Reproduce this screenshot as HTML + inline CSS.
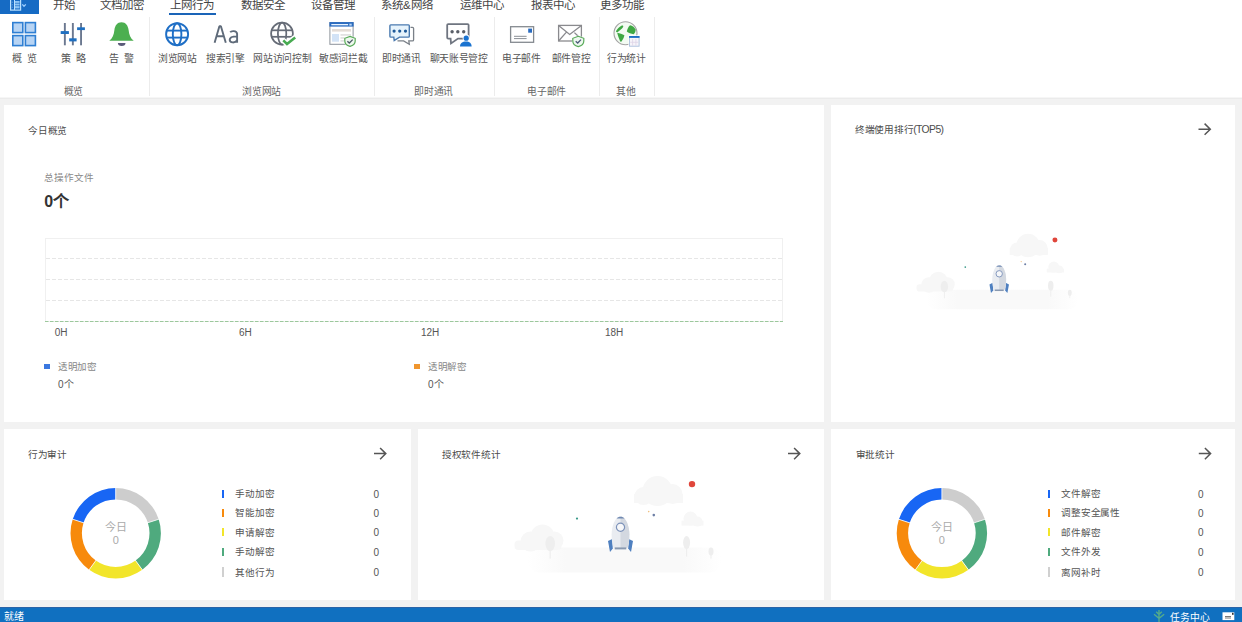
<!DOCTYPE html>
<html lang="zh-CN">
<head>
<meta charset="utf-8">
<style>
*{margin:0;padding:0;box-sizing:border-box}
html,body{width:1242px;height:622px;overflow:hidden;background:#fff;font-family:"Liberation Sans",sans-serif;color:#444}
.a{position:absolute;white-space:nowrap;line-height:1}
.sep{position:absolute;top:17px;width:1px;height:79px;background:#ececec}
#gray{position:absolute;left:0;top:97px;width:1242px;height:510px;background:#f2f2f2}
.card{position:absolute;background:#fff}
.dn{font-size:11px;color:#aaa;text-align:center;width:40px}
#status{position:absolute;left:0;top:607px;width:1242px;height:15px;background:#1070c0}
</style>
</head>
<body>
<div class="a" style="left:0;top:0;width:39px;height:14px;background:#166bc4"></div>
<svg class="a" style="left:0;top:0" width="40" height="15" viewBox="0 0 40 15">
  <rect x="10.6" y="-1" width="10" height="11.1" fill="none" stroke="#b8e0ff" stroke-width="1.2"/>
  <rect x="14" y="0" width="1" height="10" fill="#b8e0ff"/>
  <rect x="15" y="1" width="4.6" height="1.9" fill="#8cc4f4"/>
  <rect x="15" y="3.5" width="4.6" height="2" fill="#8cc4f4"/>
  <rect x="15" y="6.1" width="4.6" height="2.3" fill="#8cc4f4"/>
  <g fill="#4a8ad0"><rect x="11.5" y="1.5" width="1.6" height="1.5"/><rect x="11.5" y="4" width="1.6" height="1.5"/><rect x="11.5" y="6.5" width="1.6" height="1.5"/></g>
  <path d="M22.3 4.4 L24 6.2 L25.8 4.4" fill="none" stroke="#9fd0ff" stroke-width="1.3"/>
</svg>
<div class="a" style="left:169px;top:13px;width:47px;height:2px;background:#1a64b8"></div>
<div class="sep" style="left:149px"></div>
<div class="sep" style="left:374px"></div>
<div class="sep" style="left:494px"></div>
<div class="sep" style="left:599px"></div>
<div class="sep" style="left:654px"></div>
<svg class="a" style="left:0;top:0" width="660" height="50" viewBox="0 0 660 50">
<!-- grid -->
<g fill="#b7d4f4" stroke="#2f7fd3" stroke-width="1.6">
<rect x="12.8" y="22.6" width="10" height="10"/>
<rect x="25.4" y="22.6" width="10" height="10"/>
<rect x="12.8" y="35.6" width="10" height="10"/>
<rect x="25.4" y="35.6" width="10" height="10"/>
</g>
<!-- sliders -->
<g fill="#6b7890">
<rect x="63.9" y="23" width="1.9" height="22.3"/>
<rect x="71.9" y="23" width="1.9" height="22.3"/>
<rect x="80.1" y="23" width="1.9" height="22.3"/>
</g>
<g fill="#1f6fc0">
<rect x="60.7" y="31.1" width="8.2" height="2.9"/>
<rect x="69.2" y="38.3" width="7.4" height="3.1"/>
<rect x="77.1" y="27.3" width="7.8" height="2.8"/>
</g>
<!-- bell -->
<path d="M121.5 22.3 C117.2 22.3 115 25.6 114.4 30 C113.8 35 112.6 38.2 109.3 40.8 L133.7 40.8 C130.4 38.2 129.2 35 128.6 30 C128 25.6 125.8 22.3 121.5 22.3 Z" fill="#4caf50"/>
<path d="M117.9 43 A3.8 3 0 0 0 125.5 43 Z" fill="#5b5b7a"/>
<!-- blue globe -->
<g fill="none" stroke="#1f6fc6" stroke-width="1.9">
<circle cx="177.1" cy="34.2" r="11"/>
<ellipse cx="177.1" cy="34.2" rx="4.3" ry="11"/>
<line x1="166.6" y1="30.6" x2="187.6" y2="30.6"/>
<line x1="166.6" y1="37.6" x2="187.6" y2="37.6"/>
</g>
<!-- Aa -->
<g fill="none" stroke="#5f6b7a" stroke-width="1.9">
<path d="M214.6 42.8 L219.4 26.2 L220.9 26.2 L225.8 42.8 M216.6 36.2 L223.7 36.2" stroke-linejoin="bevel"/>
<path d="M230.2 32.2 C231.2 30.8 236.6 30.2 237.1 33.8 L237.1 42.8 M237.1 36.4 C233 36.4 229.7 37.2 229.7 39.8 C229.7 43.2 235.2 43.2 237.1 40.4"/>
</g>
<!-- gray globe -->
<g fill="none" stroke="#666c77" stroke-width="1.75">
<circle cx="282" cy="33.6" r="10.9"/>
<ellipse cx="282.1" cy="33.6" rx="4.2" ry="10.9"/>
<line x1="271.5" y1="30.3" x2="292.5" y2="30.3"/>
<line x1="271.5" y1="36.8" x2="292.5" y2="36.8"/>
</g>
<path d="M283.3 40.4 L287 44 L295.2 37.5" fill="none" stroke="#fff" stroke-width="5.5"/>
<path d="M283.3 40.4 L287 44 L295.2 37.5" fill="none" stroke="#48ab52" stroke-width="2.6"/>
<!-- browser window -->
<rect x="329.9" y="22.6" width="23.2" height="21.7" fill="#fff" stroke="#8d939b" stroke-width="1"/>
<rect x="329.4" y="22.1" width="24.2" height="4.5" fill="#2b6cc0"/>
<rect x="331.3" y="24" width="16.8" height="1.3" fill="#e8f3ff"/>
<rect x="349.3" y="23.7" width="2.4" height="1.9" fill="#bcd8f5"/>
<rect x="332" y="29" width="19" height="2.6" fill="#e4dcd6"/>
<rect x="332" y="34" width="7" height="7.7" fill="#d3e3f6"/>
<rect x="340.5" y="34" width="10.5" height="1.8" fill="#e2e2e2"/>
<rect x="340.5" y="37" width="10.5" height="1.8" fill="#e2e2e2"/>
<rect x="340.5" y="40" width="10.5" height="1.7" fill="#e2e2e2"/>
<path d="M350 35.6 L356 37.8 L356 41 C356 44.2 353.4 46.2 350 47 C346.6 46.2 344 44.2 344 41 L344 37.8 Z" fill="#fff"/>
<path d="M350 36.4 L355.2 38.3 L355.2 41 C355.2 43.8 353 45.5 350 46.3 C347 45.5 344.8 43.8 344.8 41 L344.8 38.3 Z" fill="#eef8ee" stroke="#5aab5a" stroke-width="1.2"/>
<path d="M347.4 41.2 L349.3 43 L352.7 39.6" fill="none" stroke="#4b5866" stroke-width="1.3"/>
<!-- chat 1 -->
<path d="M410.5 27.3 L412.4 27.3 Q413.6 27.3 413.6 28.5 L413.6 39.7 Q413.6 40.9 412.4 40.9 L408.8 40.9 L409.3 44.2 L403.6 40.9 L397.5 40.9" fill="none" stroke="#7a8088" stroke-width="1.3"/>
<path d="M390.7 24.9 L408.5 24.9 Q409.3 24.9 409.3 25.7 L409.3 36.3 Q409.3 37.1 408.5 37.1 L399.5 37.1 L394.2 40.6 L393.8 37.1 L390.7 37.1 Q389.9 37.1 389.9 36.3 L389.9 25.7 Q389.9 24.9 390.7 24.9 Z" fill="#e6f3fc" stroke="#4a7ab0" stroke-width="1.4"/>
<g fill="#1f5a9a"><circle cx="394.1" cy="31.1" r="1.6"/><circle cx="399.7" cy="31.1" r="1.6"/><circle cx="405.5" cy="31.1" r="1.6"/></g>
<!-- chat 2 -->
<path d="M448.2 24.1 L467.6 24.1 Q468.6 24.1 468.6 25.1 L468.6 37.6 Q468.6 38.6 467.6 38.6 L458 38.6 L451 43.4 L450.6 38.6 L448.2 38.6 Q447.2 38.6 447.2 37.6 L447.2 25.1 Q447.2 24.1 448.2 24.1 Z" fill="#fff" stroke="#6f7580" stroke-width="1.8"/>
<g fill="#5a5f68"><circle cx="452.1" cy="31.8" r="1.7"/><circle cx="457.8" cy="31.8" r="1.7"/><circle cx="463.7" cy="31.8" r="1.7"/></g>
<path d="M459 47.2 C459 42.8 461.8 40.6 466 40.6 C470.2 40.6 473 42.8 473 47.2 Z" fill="#fff"/>
<circle cx="466.2" cy="38" r="3.6" fill="#fff"/>
<circle cx="466.2" cy="38.2" r="2.6" fill="#1a73d0"/>
<path d="M460 46.6 C460 43.3 462.5 41.6 466 41.6 C469.5 41.6 471.6 43.3 471.6 46.6 Z" fill="#1a73d0"/>
<!-- envelope -->
<rect x="510.6" y="26.7" width="23" height="15.6" fill="#fff" stroke="#858a90" stroke-width="1.3"/>
<rect x="528.2" y="28.6" width="3.8" height="4.1" fill="#2a6cc0"/>
<g stroke="#8a8f95" stroke-width="1"><line x1="514" y1="36.3" x2="526.6" y2="36.3"/><line x1="514" y1="38.6" x2="526.6" y2="38.6"/></g>
<!-- mail shield -->
<g fill="none" stroke="#8a8a8e" stroke-width="1.3">
<rect x="558.6" y="25.4" width="22.8" height="15.6" fill="#fff"/>
<path d="M558.6 25.4 L569.7 34.5 L581.4 25.4 M558.6 41 L566.2 32.4 M574.4 32.6 L578 36"/>
</g>
<path d="M578.3 35.4 L584.6 37.8 L584.6 41 C584.6 44.5 581.8 46.6 578.3 47.5 C574.8 46.6 572 44.5 572 41 L572 37.8 Z" fill="#fff"/>
<path d="M578.3 36.3 L583.8 38.3 L583.8 41 C583.8 44 581.5 45.9 578.3 46.7 C575.1 45.9 572.8 44 572.8 41 L572.8 38.3 Z" fill="#eef8f0" stroke="#5aab5a" stroke-width="1.2"/>
<path d="M575.7 41.2 L577.7 43 L581 39.6" fill="none" stroke="#4a5a78" stroke-width="1.3"/>
<!-- green globe -->
<circle cx="625.5" cy="33.2" r="11.5" fill="#f3fbf2" stroke="#a3a3a3" stroke-width="1.1"/>
<g fill="#3fa843">
<path d="M622.8 25.6 C623.7 26.2 623.3 27.5 622 28.5 L617.8 31.9 C616.7 32.5 615.7 31.9 616.1 31 C617.2 28.9 619.4 26.7 621.4 25.7 C621.9 25.4 622.4 25.4 622.8 25.6 Z"/>
<path d="M617.2 32.7 C619.5 33.2 622.6 34 624.4 35.3 C624.1 37.6 622.6 39.9 621.3 41.7 C620.7 42.1 620.2 41.7 620 41 C619.1 38.3 617.7 35.5 617.2 32.7 Z"/>
<path d="M630 25.2 C632.4 25.7 634.9 27.5 635.6 29.6 C635.8 31.4 634.9 33.3 633.6 34.2 C631.1 33.7 628.4 32.9 626.8 31.4 C627.3 29 628.4 26.7 630 25.2 Z"/>
</g>
<rect x="628.4" y="35.3" width="11.8" height="12" fill="#fff"/>
<rect x="629.5" y="36.5" width="9.6" height="9.7" fill="#f6f4f9" stroke="#a9bfdc" stroke-width="0.9"/>
<rect x="629.1" y="36" width="10.4" height="1.9" fill="#1e6fc6"/>
<g stroke="#ddd3e6" stroke-width="0.8"><line x1="632.6" y1="39" x2="632.6" y2="45.6"/><line x1="635.9" y1="39" x2="635.9" y2="45.6"/><line x1="630.2" y1="42.3" x2="638.4" y2="42.3"/></g>
</svg>
<div id="gray"></div><div class="a" style="left:0;top:97px;width:1242px;height:1px;background:#f6f6f6"></div><div class="a" style="left:0;top:98px;width:1242px;height:1px;background:#ebebeb"></div>
<div class="card" style="left:4px;top:105px;width:820px;height:317px"></div>
<div class="card" style="left:831px;top:105px;width:404px;height:317px"></div>
<div class="card" style="left:4px;top:429px;width:407px;height:171px"></div>
<div class="card" style="left:418px;top:429px;width:406px;height:171px"></div>
<div class="card" style="left:831px;top:429px;width:404px;height:171px"></div>
<svg class="a" style="left:0;top:0" width="1242" height="622" viewBox="0 0 1242 622">
<defs>
<linearGradient id="gnd2" x1="0" y1="0" x2="1" y2="0"><stop offset="0" stop-color="#fff"/><stop offset="0.2" stop-color="#f9f9f9"/><stop offset="0.8" stop-color="#f9f9f9"/><stop offset="1" stop-color="#fff"/></linearGradient><radialGradient id="gnd" cx="0.5" cy="0.5" r="0.5"><stop offset="0" stop-color="#f7f7f7"/><stop offset="0.75" stop-color="#fafafa"/><stop offset="1" stop-color="#fff" stop-opacity="0"/></radialGradient>
</defs>
<!-- chart -->
<rect x="45.5" y="238.5" width="737" height="83" fill="none" stroke="#f0f0f0" stroke-width="1"/>
<g stroke="#e6e6e6" stroke-width="1" stroke-dasharray="4 2">
<line x1="46" y1="258.5" x2="782" y2="258.5"/>
<line x1="46" y1="279.5" x2="782" y2="279.5"/>
<line x1="46" y1="300.5" x2="782" y2="300.5"/>
</g>
<line x1="45" y1="321.5" x2="783" y2="321.5" stroke="#9cc89c" stroke-width="1" stroke-dasharray="3.5 1.5"/>
<rect x="44" y="364" width="6" height="5" fill="#3b78e0"/>
<rect x="414" y="364" width="6" height="5" fill="#f0962e"/>
<!-- arrows -->
<g fill="none" stroke="#555" stroke-width="1.5">
<path d="M1198.5 129.2 L1210.3 129.2 M1204.6 123.6 L1210.3 129.2 L1204.6 134.8"/>
<path d="M374 453.6 L385.8 453.6 M380.1 448 L385.8 453.6 L380.1 459.2"/>
<path d="M788 453.6 L799.8 453.6 M794.1 448 L799.8 453.6 L794.1 459.2"/>
<path d="M1198.8 453.6 L1210.6 453.6 M1204.9 448 L1210.6 453.6 L1204.9 459.2"/>
</g>
<path d="M115.70 488.00 A45.2 45.2 0 0 1 158.69 519.23 L147.85 522.76 A33.8 33.8 0 0 0 115.70 499.40 Z" fill="#cdcdcd"/><path d="M158.69 519.23 A45.2 45.2 0 0 1 142.27 569.77 L135.57 560.54 A33.8 33.8 0 0 0 147.85 522.76 Z" fill="#4faa7e"/><path d="M142.27 569.77 A45.2 45.2 0 0 1 89.13 569.77 L95.83 560.54 A33.8 33.8 0 0 0 135.57 560.54 Z" fill="#f2e52a"/><path d="M89.13 569.77 A45.2 45.2 0 0 1 72.71 519.23 L83.55 522.76 A33.8 33.8 0 0 0 95.83 560.54 Z" fill="#f78a0c"/><path d="M72.71 519.23 A45.2 45.2 0 0 1 115.70 488.00 L115.70 499.40 A33.8 33.8 0 0 0 83.55 522.76 Z" fill="#1866f4"/><line x1="115.70" y1="500.20" x2="115.70" y2="487.20" stroke="#fff" stroke-width="0.8"/><line x1="147.08" y1="523.00" x2="159.45" y2="518.99" stroke="#fff" stroke-width="0.8"/><line x1="135.10" y1="559.90" x2="142.74" y2="570.41" stroke="#fff" stroke-width="0.8"/><line x1="96.30" y1="559.90" x2="88.66" y2="570.41" stroke="#fff" stroke-width="0.8"/><line x1="84.32" y1="523.00" x2="71.95" y2="518.99" stroke="#fff" stroke-width="0.8"/>
<path d="M941.90 488.10 A45.2 45.2 0 0 1 984.89 519.33 L974.05 522.86 A33.8 33.8 0 0 0 941.90 499.50 Z" fill="#cdcdcd"/><path d="M984.89 519.33 A45.2 45.2 0 0 1 968.47 569.87 L961.77 560.64 A33.8 33.8 0 0 0 974.05 522.86 Z" fill="#4faa7e"/><path d="M968.47 569.87 A45.2 45.2 0 0 1 915.33 569.87 L922.03 560.64 A33.8 33.8 0 0 0 961.77 560.64 Z" fill="#f2e52a"/><path d="M915.33 569.87 A45.2 45.2 0 0 1 898.91 519.33 L909.75 522.86 A33.8 33.8 0 0 0 922.03 560.64 Z" fill="#f78a0c"/><path d="M898.91 519.33 A45.2 45.2 0 0 1 941.90 488.10 L941.90 499.50 A33.8 33.8 0 0 0 909.75 522.86 Z" fill="#1866f4"/><line x1="941.90" y1="500.30" x2="941.90" y2="487.30" stroke="#fff" stroke-width="0.8"/><line x1="973.28" y1="523.10" x2="985.65" y2="519.09" stroke="#fff" stroke-width="0.8"/><line x1="961.30" y1="560.00" x2="968.94" y2="570.51" stroke="#fff" stroke-width="0.8"/><line x1="922.50" y1="560.00" x2="914.86" y2="570.51" stroke="#fff" stroke-width="0.8"/><line x1="910.52" y1="523.10" x2="898.15" y2="519.09" stroke="#fff" stroke-width="0.8"/>
<g transform="translate(620.5 534.6)">
<rect x="-93" y="13" width="194" height="25" rx="12" fill="url(#gnd2)"/>
<g fill="#f7f7f7">
<circle cx="-90" cy="7" r="10"/><circle cx="-78" cy="2" r="12"/><circle cx="-66" cy="6" r="9"/><rect x="-106" y="6" width="47" height="9.5" rx="4"/>
<circle cx="37" cy="-43.5" r="15"/><circle cx="52" cy="-40.5" r="10"/><circle cx="23" cy="-38.5" r="9"/><rect x="13.5" y="-40.5" width="49" height="9"/>
<circle cx="70" cy="-16" r="7"/><circle cx="77" cy="-13" r="5"/><rect x="61" y="-14" width="22" height="5"/>
</g>
<g fill="#eeeeee">
<ellipse cx="-70.3" cy="9" rx="4.8" ry="7.5"/><rect x="-70.9" y="12" width="1.2" height="12"/>
<ellipse cx="66.1" cy="8" rx="3.5" ry="6.5"/><rect x="65.5" y="10" width="1.2" height="12"/>
<ellipse cx="90.5" cy="17" rx="2.5" ry="4"/><rect x="90" y="18" width="1" height="6"/>
</g>
<circle cx="71.5" cy="-50.5" r="3.2" fill="#e0463b"/>
<circle cx="-43.5" cy="-16" r="1.1" fill="#3a9a8a"/>
<circle cx="33.3" cy="-19.5" r="1.3" fill="#6d7fa6"/>
<circle cx="28.2" cy="-23" r="0.8" fill="#f0c080"/>
<path d="M-12.5 6.3 L-8.3 4.3 L-7.7 14 L-10.5 17.4 Z" fill="#4f80c0"/>
<path d="M12.5 6.3 L8.3 4.3 L7.7 14 L10.5 17.4 Z" fill="#4f80c0"/>
<path d="M0 -18.2 C-5.6 -18.2 -8.9 -8 -8.9 0 C-8.9 6 -8.1 10 -7 13.2 L7 13.2 C8.1 10 8.9 6 8.9 0 C8.9 -8 5.6 -18.2 0 -18.2 Z" fill="#e9ecf1"/>
<path d="M0 -18.2 C5.6 -18.2 8.9 -8 8.9 0 C8.9 6 8.1 10 7 13.2 L0 13.2 Z" fill="#d3d8e0"/>
<path d="M-3.8 -16.2 C-2.6 -18.4 2.6 -18.4 3.8 -16.2 Z" fill="#7089b2"/>
<rect x="-5.8" y="12.8" width="11.6" height="2" fill="#8898b0"/>
<circle cx="0" cy="-7.3" r="4.1" fill="#f6f7f9" stroke="#7d93ba" stroke-width="1.2"/>
</g>
</g>
<g transform="translate(999.2 279.5) scale(0.78)">
<rect x="-93" y="13" width="194" height="25" rx="12" fill="url(#gnd2)"/>
<g fill="#f7f7f7">
<circle cx="-90" cy="7" r="10"/><circle cx="-78" cy="2" r="12"/><circle cx="-66" cy="6" r="9"/><rect x="-106" y="6" width="47" height="9.5" rx="4"/>
<circle cx="37" cy="-43.5" r="15"/><circle cx="52" cy="-40.5" r="10"/><circle cx="23" cy="-38.5" r="9"/><rect x="13.5" y="-40.5" width="49" height="9"/>
<circle cx="70" cy="-16" r="7"/><circle cx="77" cy="-13" r="5"/><rect x="61" y="-14" width="22" height="5"/>
</g>
<g fill="#eeeeee">
<ellipse cx="-70.3" cy="9" rx="4.8" ry="7.5"/><rect x="-70.9" y="12" width="1.2" height="12"/>
<ellipse cx="66.1" cy="8" rx="3.5" ry="6.5"/><rect x="65.5" y="10" width="1.2" height="12"/>
<ellipse cx="90.5" cy="17" rx="2.5" ry="4"/><rect x="90" y="18" width="1" height="6"/>
</g>
<circle cx="71.5" cy="-50.5" r="3.2" fill="#e0463b"/>
<circle cx="-43.5" cy="-16" r="1.1" fill="#3a9a8a"/>
<circle cx="33.3" cy="-19.5" r="1.3" fill="#6d7fa6"/>
<circle cx="28.2" cy="-23" r="0.8" fill="#f0c080"/>
<path d="M-12.5 6.3 L-8.3 4.3 L-7.7 14 L-10.5 17.4 Z" fill="#4f80c0"/>
<path d="M12.5 6.3 L8.3 4.3 L7.7 14 L10.5 17.4 Z" fill="#4f80c0"/>
<path d="M0 -18.2 C-5.6 -18.2 -8.9 -8 -8.9 0 C-8.9 6 -8.1 10 -7 13.2 L7 13.2 C8.1 10 8.9 6 8.9 0 C8.9 -8 5.6 -18.2 0 -18.2 Z" fill="#e9ecf1"/>
<path d="M0 -18.2 C5.6 -18.2 8.9 -8 8.9 0 C8.9 6 8.1 10 7 13.2 L0 13.2 Z" fill="#d3d8e0"/>
<path d="M-3.8 -16.2 C-2.6 -18.4 2.6 -18.4 3.8 -16.2 Z" fill="#7089b2"/>
<rect x="-5.8" y="12.8" width="11.6" height="2" fill="#8898b0"/>
<circle cx="0" cy="-7.3" r="4.1" fill="#f6f7f9" stroke="#7d93ba" stroke-width="1.2"/>
</g>
</g>
</svg>
<div class="a" style="left:53px;top:-0.5px;font-size:11.5px;color:#444;">开始</div>
<div class="a" style="left:100px;top:-0.5px;font-size:11.5px;color:#444;">文档加密</div>
<div class="a" style="left:170px;top:-0.5px;font-size:11.5px;color:#444;">上网行为</div>
<div class="a" style="left:240.5px;top:-0.5px;font-size:11.5px;color:#444;">数据安全</div>
<div class="a" style="left:311px;top:-0.5px;font-size:11.5px;color:#444;">设备管理</div>
<div class="a" style="left:381px;top:-0.5px;font-size:11.5px;color:#444;">系统&amp;网络</div>
<div class="a" style="left:460px;top:-0.5px;font-size:11.5px;color:#444;">运维中心</div>
<div class="a" style="left:530.5px;top:-0.5px;font-size:11.5px;color:#444;">报表中心</div>
<div class="a" style="left:600px;top:-0.5px;font-size:11.5px;color:#444;">更多功能</div>
<div class="a" style="left:12.3px;top:53.5px;font-size:10px;color:#555;word-spacing:2px">概 览</div>
<div class="a" style="left:60.8px;top:53.5px;font-size:10px;color:#555;word-spacing:2px">策 略</div>
<div class="a" style="left:109px;top:53.5px;font-size:10px;color:#555;word-spacing:2.5px">告 警</div>
<div class="a" style="left:158px;top:53.5px;font-size:9.8px;color:#555;letter-spacing:-0.3px">浏览网站</div>
<div class="a" style="left:206px;top:53.5px;font-size:9.8px;color:#555;letter-spacing:-0.3px">搜索引擎</div>
<div class="a" style="left:253.3px;top:53.5px;font-size:9.8px;color:#555;letter-spacing:-0.3px">网站访问控制</div>
<div class="a" style="left:319px;top:53.5px;font-size:9.8px;color:#555;letter-spacing:-0.3px">敏感词拦截</div>
<div class="a" style="left:382px;top:53.5px;font-size:9.8px;color:#555;letter-spacing:-0.3px">即时通讯</div>
<div class="a" style="left:429.5px;top:53.5px;font-size:9.8px;color:#555;letter-spacing:-0.3px">聊天账号管控</div>
<div class="a" style="left:502px;top:53.5px;font-size:9.8px;color:#555;letter-spacing:-0.3px">电子邮件</div>
<div class="a" style="left:551.6px;top:53.5px;font-size:9.8px;color:#555;letter-spacing:-0.3px">邮件管控</div>
<div class="a" style="left:607px;top:53.5px;font-size:9.8px;color:#555;letter-spacing:-0.3px">行为统计</div>
<div class="a" style="left:63.5px;top:86.5px;font-size:9.8px;color:#666;letter-spacing:-0.25px">概览</div>
<div class="a" style="left:242px;top:86.5px;font-size:9.8px;color:#666;letter-spacing:-0.25px">浏览网站</div>
<div class="a" style="left:414px;top:86.5px;font-size:9.8px;color:#666;letter-spacing:-0.25px">即时通讯</div>
<div class="a" style="left:527px;top:86.5px;font-size:9.8px;color:#666;letter-spacing:-0.25px">电子邮件</div>
<div class="a" style="left:616px;top:86.5px;font-size:9.8px;color:#666;letter-spacing:-0.25px">其他</div>
<div class="a" style="left:28.3px;top:126.3px;font-size:9.6px;color:#4d4d4d;letter-spacing:-0.3px">今日概览</div>
<div class="a" style="left:44.2px;top:173px;font-size:9.6px;color:#8a8a8a;">总操作文件</div>
<div class="a" style="left:44.2px;top:194px;font-size:16px;color:#333;font-weight:bold">0个</div>
<div class="a" style="left:855px;top:125.3px;font-size:9.6px;color:#4d4d4d;"><span style="letter-spacing:-0.3px">终端使用排行</span><span style="font-size:10.4px;letter-spacing:-0.6px">(TOP5)</span></div>
<div class="a" style="left:28px;top:449.5px;font-size:9.6px;color:#4d4d4d;letter-spacing:-0.3px">行为审计</div>
<div class="a" style="left:442px;top:449.5px;font-size:9.6px;color:#4d4d4d;letter-spacing:-0.3px">授权软件统计</div>
<div class="a" style="left:855.8px;top:449.5px;font-size:9.6px;color:#4d4d4d;letter-spacing:-0.3px">审批统计</div>
<div class="a" style="left:54.7px;top:327.6px;font-size:10px;color:#555;">0H</div>
<div class="a" style="left:239px;top:327.6px;font-size:10px;color:#555;">6H</div>
<div class="a" style="left:421px;top:327.6px;font-size:10px;color:#555;">12H</div>
<div class="a" style="left:605px;top:327.6px;font-size:10px;color:#555;">18H</div>
<div class="a" style="left:58px;top:361.8px;font-size:9.5px;color:#888;letter-spacing:-0.3px">透明加密</div>
<div class="a" style="left:58px;top:379.8px;font-size:10px;color:#555;">0个</div>
<div class="a" style="left:428px;top:361.8px;font-size:9.5px;color:#888;letter-spacing:-0.3px">透明解密</div>
<div class="a" style="left:428px;top:379.8px;font-size:10px;color:#555;">0个</div>
<div class="a dn" style="left:95.7px;top:521.5px">今日</div>
<div class="a dn" style="left:95.7px;top:535px">0</div>
<div class="a dn" style="left:921.9px;top:521.5px">今日</div>
<div class="a dn" style="left:921.9px;top:535px">0</div>
<div class="a" style="left:221.5px;top:489.5px;width:2.8px;height:8.4px;background:#1866f4"></div>
<div class="a" style="left:235.2px;top:489.3px;font-size:9.6px;color:#555;letter-spacing:-0.2px">手动加密</div>
<div class="a" style="left:373.5px;top:489.9px;font-size:10px;color:#555;">0</div>
<div class="a" style="left:221.5px;top:508.50000000000006px;width:2.8px;height:8.4px;background:#f78a0c"></div>
<div class="a" style="left:235.2px;top:508.30000000000007px;font-size:9.6px;color:#555;letter-spacing:-0.2px">智能加密</div>
<div class="a" style="left:373.5px;top:508.90000000000003px;font-size:10px;color:#555;">0</div>
<div class="a" style="left:221.5px;top:528.0px;width:2.8px;height:8.4px;background:#f2e52a"></div>
<div class="a" style="left:235.2px;top:527.8000000000001px;font-size:9.6px;color:#555;letter-spacing:-0.2px">申请解密</div>
<div class="a" style="left:373.5px;top:528.4000000000001px;font-size:10px;color:#555;">0</div>
<div class="a" style="left:221.5px;top:547.5px;width:2.8px;height:8.4px;background:#4faa7e"></div>
<div class="a" style="left:235.2px;top:547.3000000000001px;font-size:9.6px;color:#555;letter-spacing:-0.2px">手动解密</div>
<div class="a" style="left:373.5px;top:547.9000000000001px;font-size:10px;color:#555;">0</div>
<div class="a" style="left:221.5px;top:567.0px;width:2.8px;height:10px;background:#d0d0d0"></div>
<div class="a" style="left:235.2px;top:567.6px;font-size:9.6px;color:#555;letter-spacing:-0.2px">其他行为</div>
<div class="a" style="left:373.5px;top:568.2px;font-size:10px;color:#555;">0</div>
<div class="a" style="left:1047.5px;top:489.5px;width:2.8px;height:8.4px;background:#1866f4"></div>
<div class="a" style="left:1061.2px;top:489.3px;font-size:9.6px;color:#555;letter-spacing:-0.2px">文件解密</div>
<div class="a" style="left:1198px;top:489.9px;font-size:10px;color:#555;">0</div>
<div class="a" style="left:1047.5px;top:508.50000000000006px;width:2.8px;height:8.4px;background:#f78a0c"></div>
<div class="a" style="left:1061.2px;top:508.30000000000007px;font-size:9.6px;color:#555;letter-spacing:-0.2px">调整安全属性</div>
<div class="a" style="left:1198px;top:508.90000000000003px;font-size:10px;color:#555;">0</div>
<div class="a" style="left:1047.5px;top:528.0px;width:2.8px;height:8.4px;background:#f2e52a"></div>
<div class="a" style="left:1061.2px;top:527.8000000000001px;font-size:9.6px;color:#555;letter-spacing:-0.2px">邮件解密</div>
<div class="a" style="left:1198px;top:528.4000000000001px;font-size:10px;color:#555;">0</div>
<div class="a" style="left:1047.5px;top:547.5px;width:2.8px;height:8.4px;background:#4faa7e"></div>
<div class="a" style="left:1061.2px;top:547.3000000000001px;font-size:9.6px;color:#555;letter-spacing:-0.2px">文件外发</div>
<div class="a" style="left:1198px;top:547.9000000000001px;font-size:10px;color:#555;">0</div>
<div class="a" style="left:1047.5px;top:567.0px;width:2.8px;height:10px;background:#d0d0d0"></div>
<div class="a" style="left:1061.2px;top:567.6px;font-size:9.6px;color:#555;letter-spacing:-0.2px">离网补时</div>
<div class="a" style="left:1198px;top:568.2px;font-size:10px;color:#555;">0</div>
<div id="status"></div><div class="a" style="left:0;top:607px;width:1242px;height:1px;background:#2a64a8"></div>
<svg class="a" style="left:0;top:600px" width="1242" height="22" viewBox="0 600 1242 22">
<path d="M1159 610 L1159 622 M1154 614.3 L1159 618.3 L1164.2 614.3 M1156.2 611.8 L1159 614.5 L1161.8 611.8" stroke="#55ab8a" stroke-width="1.4" fill="none"/>
<rect x="1222.5" y="612.3" width="11.8" height="7.8" fill="#fff"/>
<rect x="1232" y="612.8" width="1.6" height="2" fill="#333"/>
<line x1="1225" y1="616.5" x2="1231" y2="616.5" stroke="#555" stroke-width="0.8"/>
<line x1="1225" y1="618" x2="1231" y2="618" stroke="#555" stroke-width="0.8"/>
</svg>
<div class="a" style="left:4px;top:612px;font-size:10px;color:#fff">就绪</div>
<div class="a" style="left:1170.4px;top:612.5px;font-size:9.8px;color:#fff">任务中心</div>
</body>
</html>
